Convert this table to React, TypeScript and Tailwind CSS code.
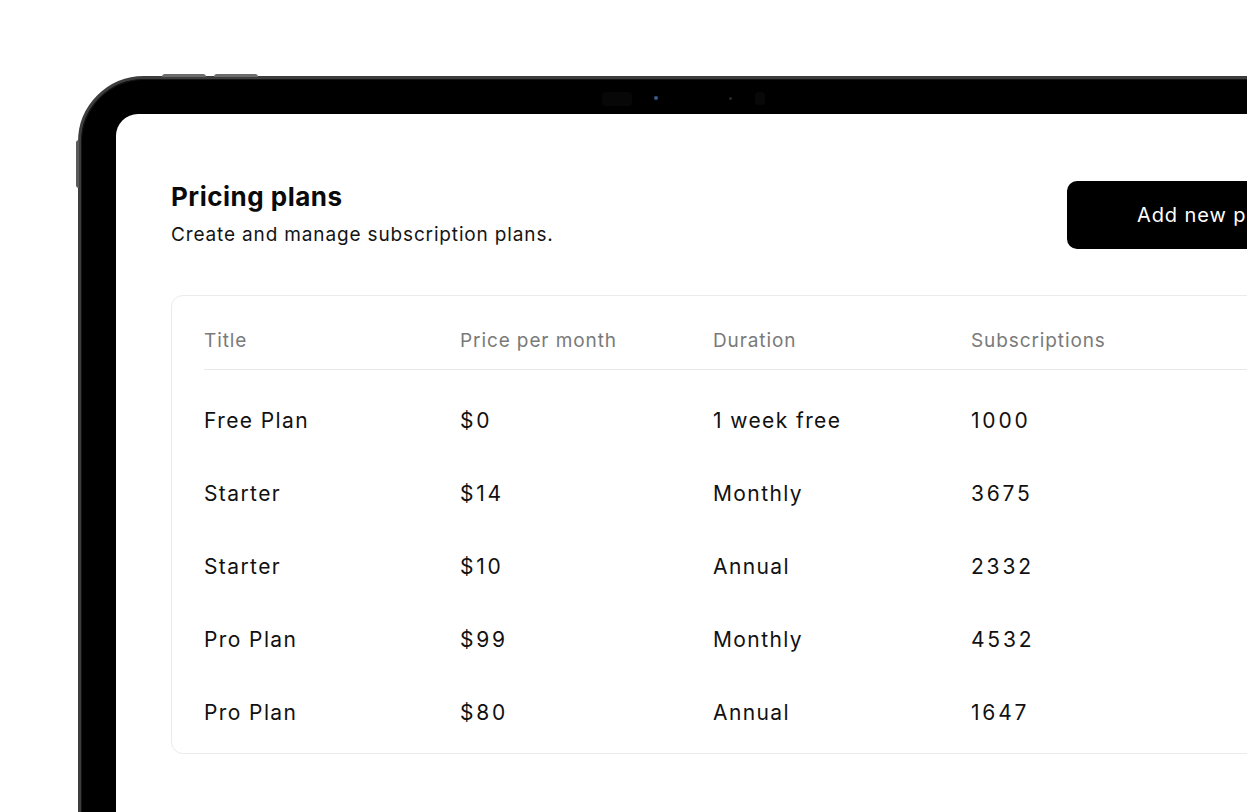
import { ReactNode } from "react";

type Plan = {
  title: string;
  price: string;
  duration: string;
  subscriptions: number;
};

const plans: Plan[] = [
  { title: "Free Plan", price: "$0", duration: "1 week free", subscriptions: 1000 },
  { title: "Starter", price: "$14", duration: "Monthly", subscriptions: 3675 },
  { title: "Starter", price: "$10", duration: "Annual", subscriptions: 2332 },
  { title: "Pro Plan", price: "$99", duration: "Monthly", subscriptions: 4532 },
  { title: "Pro Plan", price: "$80", duration: "Annual", subscriptions: 1647 },
];

const cols = "grid grid-cols-[256px_253px_258px_1fr]";

const Cell = ({ children, num }: { children: ReactNode; num?: boolean }) => (
  <div className={num ? "truncate tracking-[2.8px]" : "truncate"}>{children}</div>
);

const DeviceFrame = ({ children }: { children: ReactNode }) => (
  <div className="relative w-[1400px] h-[900px] rounded-tl-[66px] bg-black border-[3px] border-[#3d3d3d] shadow-[inset_0_0_0_1px_#151515] p-[35px]">
    {/* hardware buttons */}
    <div className="absolute -top-[5px] left-[81px] h-[3px] w-[44px] rounded-t-sm bg-[#6b6b6b]" />
    <div className="absolute -top-[5px] left-[133px] h-[3px] w-[44px] rounded-t-sm bg-[#6b6b6b]" />
    <div className="absolute top-[61px] -left-[5px] h-[48px] w-[3px] rounded-l-sm bg-[#5a5a5a]" />

    {/* camera strip */}
    <div className="absolute top-[13px] left-[521px] h-[14px] w-[30px] rounded-sm bg-[#070707]" />
    <div className="absolute top-[17px] left-[573px] h-[4px] w-[4px] rounded-full bg-[#3a5a8a]" />
    <div className="absolute top-[18px] left-[648px] h-[3px] w-[3px] rounded-full bg-[#2a2a2a]" />
    <div className="absolute top-[13px] left-[674px] h-[13px] w-[10px] rounded-sm bg-[#080808]" />

    <div className="h-full rounded-tl-[22px] bg-white">{children}</div>
  </div>
);

export default function App() {
  return (
    <div
      className="h-[812px] w-[1247px] overflow-hidden bg-white"
      style={{ fontFamily: "Inter, 'Noto Sans', sans-serif" }}
    >
      <div className="pl-[78px] pt-[76px]">
        <DeviceFrame>
          <div className="w-[1221px] pl-[55px] pt-[67px]">
            {/* Header */}
            <div className="flex items-start justify-between">
              <div>
                <h1 className="text-[26px] leading-[32px] font-bold tracking-[0.5px] text-[#0a0a0a]">
                  Pricing plans
                </h1>
                <p className="mt-[9px] text-[19px] leading-[26px] tracking-[0.85px] text-[#141414]">
                  Create and manage subscription plans.
                </p>
              </div>
              <button className="h-[68px] w-[270px] rounded-[10px] bg-black pl-[70px] text-left text-[20px] tracking-[0.9px] text-white">
                Add new plan
              </button>
            </div>

            {/* Table */}
            <div className="mt-[46px] rounded-[12px] border border-[#ebebeb] px-[32px] pt-[32px] pb-[4px]">
              <div
                className={`${cols} border-b border-[#e8e8e8] pb-[15px] text-[19px] leading-[26px] tracking-[0.9px] text-[#7a7a7a]`}
              >
                <Cell>Title</Cell>
                <Cell>Price per month</Cell>
                <Cell>Duration</Cell>
                <Cell>Subscriptions</Cell>
              </div>
              <div className="pt-[14px]">
                {plans.map((plan, i) => (
                  <div
                    key={i}
                    className={`${cols} h-[73px] items-center text-[21px] tracking-[1.4px] text-[#111111]`}
                  >
                    <Cell>{plan.title}</Cell>
                    <Cell num>{plan.price}</Cell>
                    <Cell>{plan.duration}</Cell>
                    <Cell num>{plan.subscriptions}</Cell>
                  </div>
                ))}
              </div>
            </div>
          </div>
        </DeviceFrame>
      </div>
    </div>
  );
}
